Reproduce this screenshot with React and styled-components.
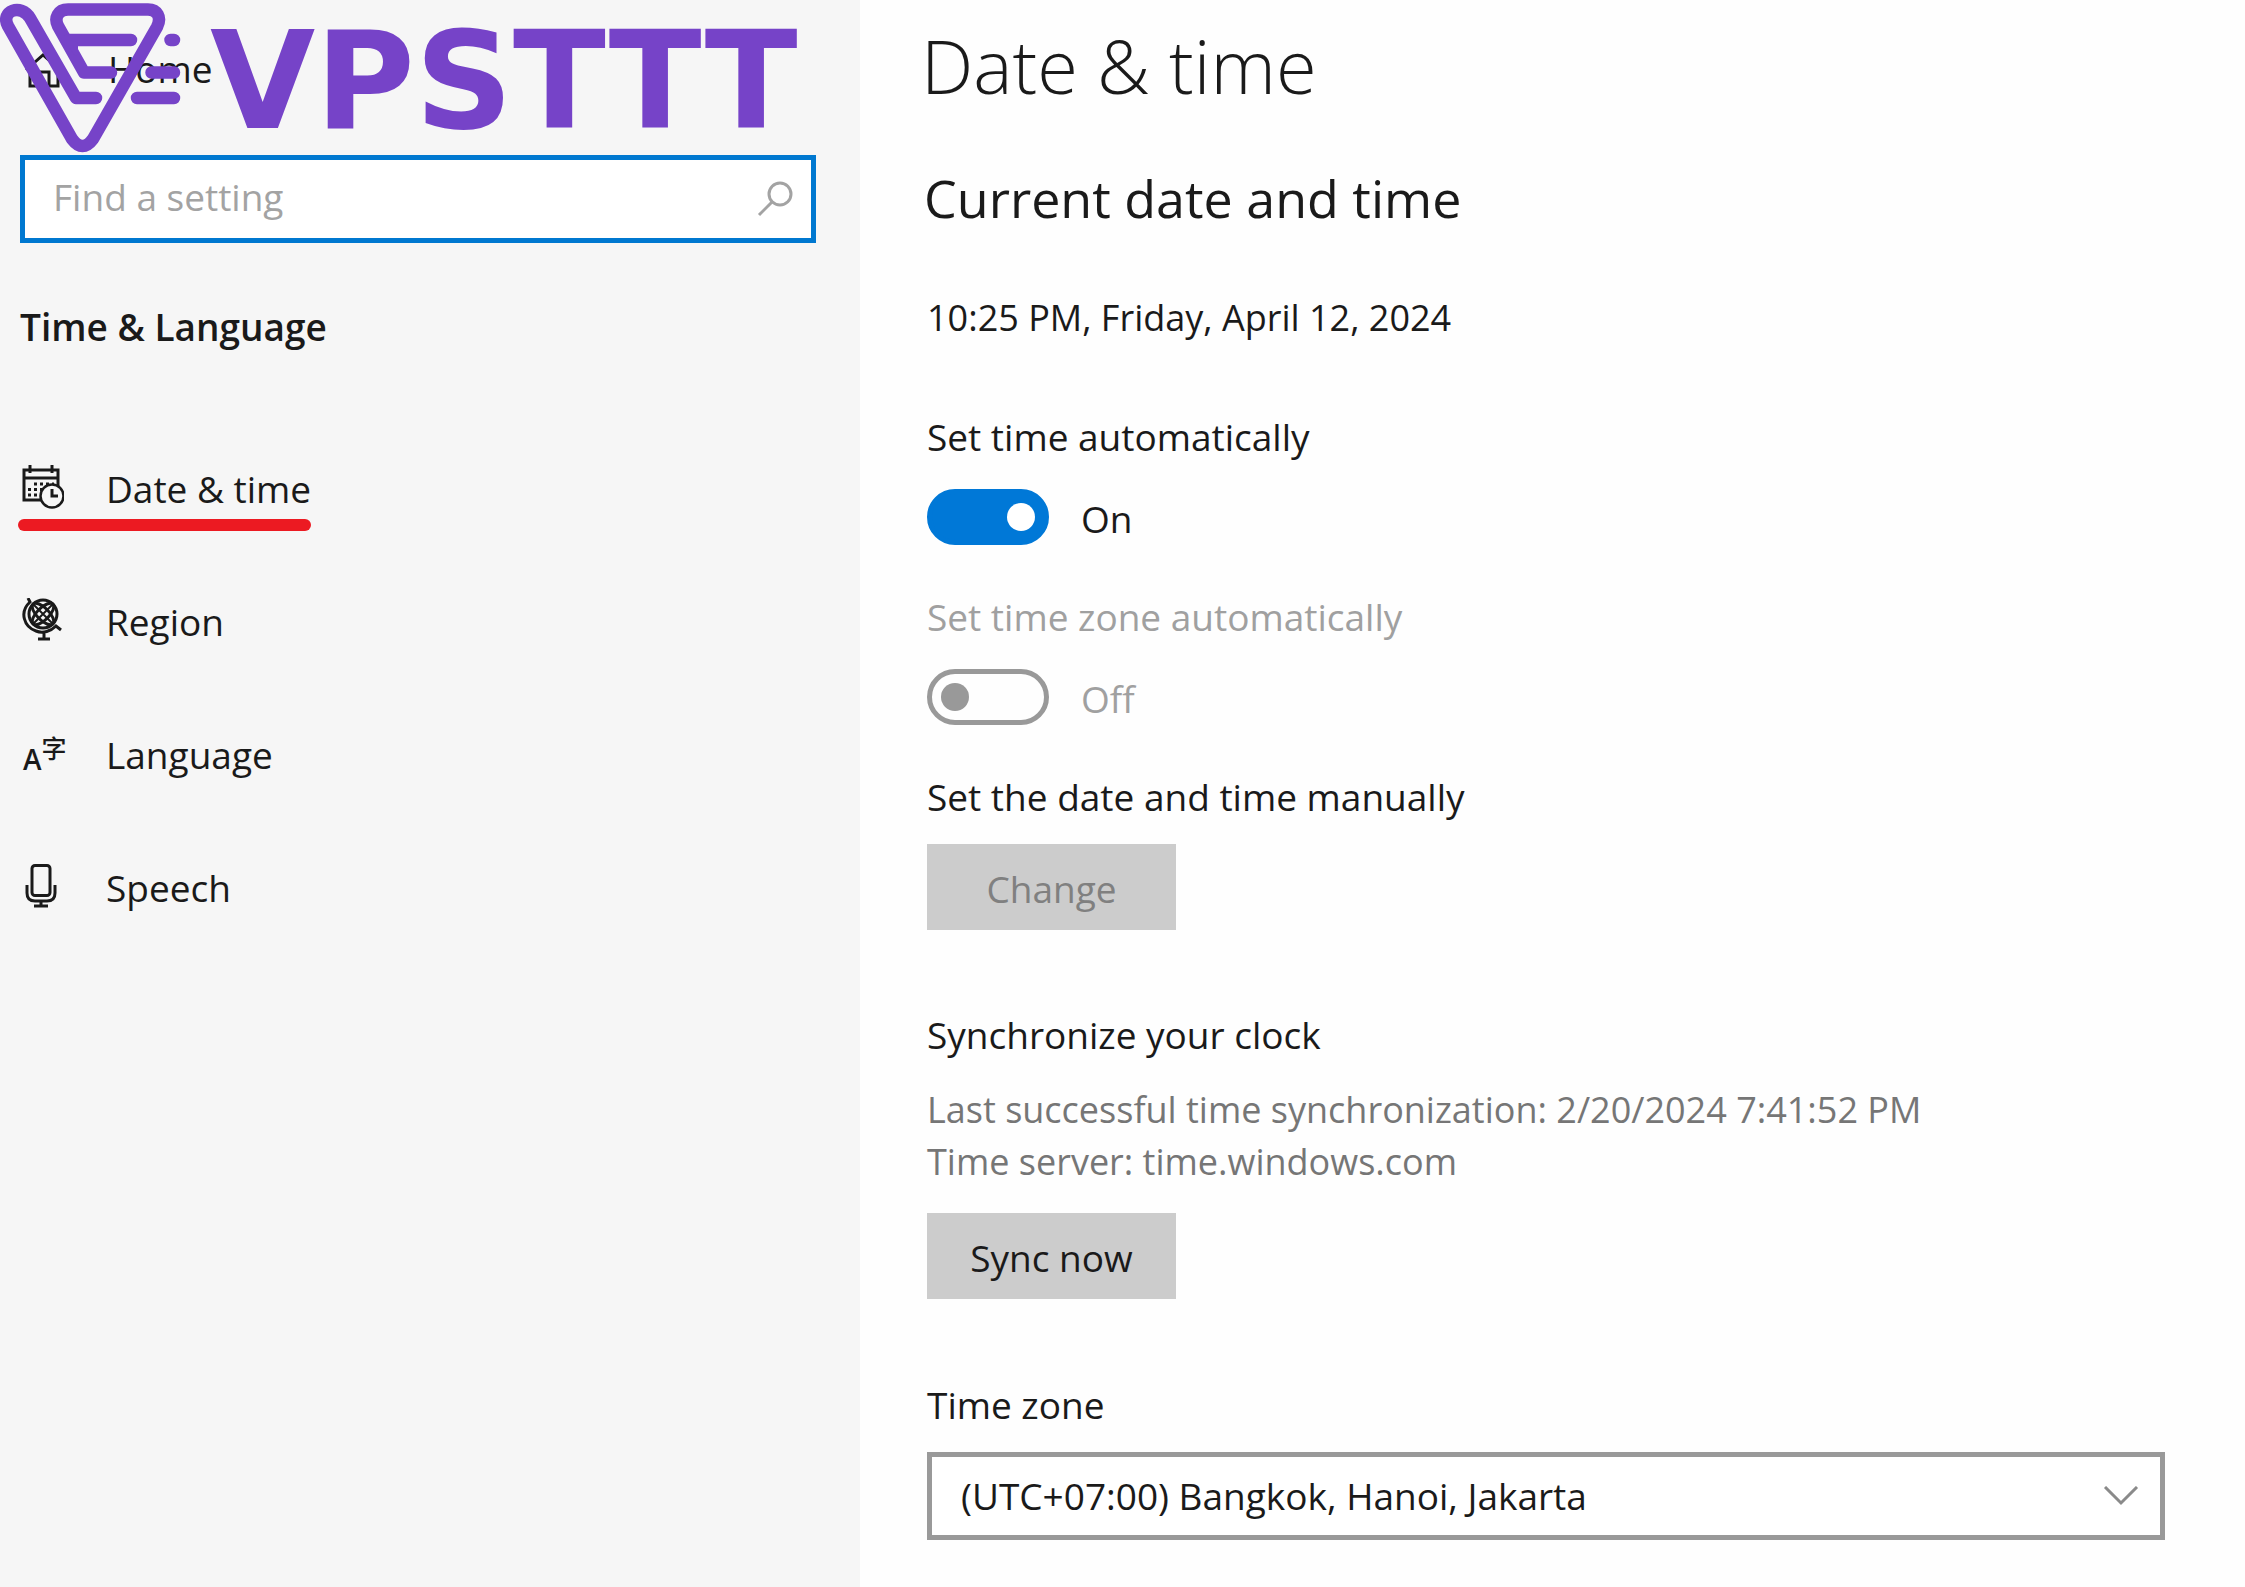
import { useState } from "react";
import styled, { createGlobalStyle } from "styled-components";

const GlobalStyle = createGlobalStyle`
  *,
  *::before,
  *::after {
    box-sizing: border-box;
  }

  body {
    margin: 0;
    background: #fefefe;
    color: #1a1a1a;
    font-family: "Open Sans", "Noto Sans", sans-serif;
    font-size: 37px;
    line-height: 52px;
  }

  h1, h2, h3, p, ul {
    margin: 0;
    padding: 0;
  }

  button, input, select {
    font: inherit;
    color: inherit;
  }
`;

const Page = styled.div`
  display: flex;
  min-height: 100vh;
`;

/* Sidebar */

const Sidebar = styled.aside`
  position: relative;
  flex: 0 1 860px;
  padding: 43px 44px 40px 20px;
  background: #f6f6f6;
`;

const Brand = styled.div`
  position: absolute;
  top: 0;
  left: 0;
  display: flex;
  align-items: flex-start;
  gap: 26px;
  color: #7643c8;
  pointer-events: none;
`;

const BrandName = styled.span`
  font-family: "DejaVu Sans", sans-serif;
  font-size: 136px;
  font-weight: 700;
  line-height: 162px;
`;

const NavLink = styled.a`
  display: flex;
  align-items: center;
  gap: 42px;
  color: inherit;
  text-decoration: none;
`;

const HomeLink = styled(NavLink)`
  padding-left: 2px;
`;

const SearchBox = styled.label`
  display: flex;
  align-items: center;
  height: 88px;
  margin-top: 60px;
  padding: 0 14px 0 28px;
  border: 5px solid #0078d0;
  background: #fff;
  color: #a3a3a3;
`;

const SearchInput = styled.input`
  flex: 1;
  min-width: 0;
  padding: 0 0 4px;
  border: 0;
  outline: 0;
  background: transparent;

  &::placeholder {
    color: #a3a3a3;
    opacity: 1;
  }
`;

const SidebarTitle = styled.h3`
  margin-top: 58px;
  font-size: 37px;
  font-weight: 600;
`;

const NavList = styled.ul`
  display: flex;
  flex-direction: column;
  gap: 65px;
  margin-top: 110px;
  list-style: none;
`;

const NavItem = styled.li`
  width: fit-content;
  height: 68px;

  &::after {
    content: "";
    display: ${({ $active }) => ($active ? "block" : "none")};
    height: 12px;
    margin-top: 4px;
    margin-left: -2px;
    border-radius: 6px;
    background: #ec1a22;
  }
`;

const Icon = styled.svg`
  flex: none;
  width: 44px;
  height: 44px;
  fill: none;
  stroke: currentColor;
  stroke-width: 3;
`;

const NavIcon = styled(Icon)`
  height: 48px;
`;

const LanguageGlyphs = styled.span`
  display: flex;
  flex: none;
  align-items: center;
  width: 44px;
  height: 52px;
`;

const LatinGlyph = styled.span`
  padding: 8px 0 0 3px;
  font-size: 28px;
  font-weight: 600;
  line-height: 40px;
`;

const HanGlyph = styled.span`
  padding-bottom: 16px;
  font-family: "Noto Sans CJK SC", sans-serif;
  font-size: 25px;
  font-weight: 500;
  line-height: 36px;
`;

/* Content */

const Content = styled.main`
  flex: 1;
  min-width: 0;
  padding: 18px 80px 46px 67px;
`;

const Title = styled.h1`
  margin-left: -6px;
  font-size: 74px;
  font-weight: 350;
  line-height: 96px;
`;

const Subtitle = styled.h2`
  margin: 50px 0 0 -3px;
  font-size: 52px;
  font-weight: 400;
  line-height: 68px;
`;

const Today = styled.p`
  margin-top: 60px;
  font-size: 36px;
`;

const Setting = styled.section`
  display: flex;
  flex-direction: column;
  align-items: flex-start;
  gap: ${({ $gap }) => $gap || 21}px;
  margin-top: ${({ $top }) => $top}px;
  color: ${({ $disabled }) => ($disabled ? "#a0a0a0" : "inherit")};
`;

const Label = styled.label`
  display: block;
`;

const ToggleRow = styled.div`
  display: flex;
  align-items: center;
  gap: 32px;
  height: 56px;
`;

const ToggleState = styled.span`
  padding-top: 4px;
`;

const Toggle = styled.input`
  appearance: none;
  display: flex;
  align-items: center;
  justify-content: flex-start;
  width: 122px;
  height: 56px;
  margin: 0;
  padding: 0 9px;
  border: 5px solid #999;
  border-radius: 28px;

  &::before {
    content: "";
    width: 28px;
    height: 28px;
    border-radius: 50%;
    background: #999;
  }

  &:checked {
    justify-content: flex-end;
    border-color: #0078d7;
    background: #0078d7;
  }

  &:checked::before {
    background: #fff;
  }
`;

const Button = styled.button`
  width: 249px;
  height: 86px;
  padding: 4px 0 0;
  border: 0;
  background: #ccc;

  &:disabled {
    color: #808080;
  }
`;

const Hint = styled.p`
  margin-bottom: 2px;
  color: #767676;
  font-size: 36px;
`;

const SelectBox = styled.div`
  display: grid;
  align-items: center;
  width: 100%;
`;

const Select = styled.select`
  grid-area: 1 / 1;
  appearance: none;
  width: 100%;
  height: 88px;
  padding: 0 80px 0 29px;
  border: 5px solid #999;
  border-radius: 0;
  background: #fff;
`;

const Chevron = styled.svg`
  grid-area: 1 / 1;
  justify-self: end;
  width: 36px;
  height: 20px;
  margin-right: 26px;
  fill: none;
  stroke: #8a8a8a;
  stroke-width: 3;
  pointer-events: none;
`;

function BrandMark() {
  return (
    <svg width="184" height="156" viewBox="0 0 184 156" fill="none" stroke="currentColor" strokeWidth="12.5" strokeLinecap="round" strokeLinejoin="round">
      <path d="M96 98H76L30 18C21 3 0 11 8 26L72 139Q82.500 153 93 139L157 27C162 17 157 9.500 148 9.500H68C58 9.500 54 18 58 26L84 72.500H111" />
      <path d="M68 40H131M170.500 40H174M151.500 72.500H174M137 98H174" />
      <path d="M68 42L76 54V44Z" strokeWidth="4" fill="currentColor" />
    </svg>
  );
}

function HomeIcon() {
  return (
    <Icon viewBox="0 0 44 44">
      <path d="M4 23L21 8L38 23M8 20V39H18V25H27V39H36V20" />
    </Icon>
  );
}

function SearchIcon() {
  return (
    <Icon viewBox="0 0 44 44">
      <circle cx="27" cy="17" r="11" />
      <path d="M19 25L6 38" />
    </Icon>
  );
}

function CalendarIcon() {
  return (
    <NavIcon viewBox="0 0 44 48">
      <path d="M4 5H38V35H4ZM4 13H38M10 0V8M32 0V8" />
      <path d="M14 19H34M8 24.500H28M8 30H22" strokeDasharray="3 3" />
      <circle cx="32" cy="31" r="11.500" fill="#f6f6f6" strokeWidth="2.500" />
      <path d="M32 24V31H38" />
    </NavIcon>
  );
}

function GlobeIcon() {
  return (
    <NavIcon viewBox="0 0 44 48">
      <circle cx="23" cy="16" r="14" />
      <ellipse cx="23" cy="16" rx="6" ry="14" transform="rotate(-45 23 16)" />
      <ellipse cx="23" cy="16" rx="6" ry="14" transform="rotate(45 23 16)" />
      <path d="M13 6L33 26M33 6L13 26" strokeWidth="2" />
      <path d="M8 0L10 4C-1 14 4 29 16 33C23 36 31 33 36 28L41 32M24 34V41M18 41H30" />
    </NavIcon>
  );
}

function LanguageIcon() {
  return (
    <LanguageGlyphs aria-hidden="true">
      <LatinGlyph>A</LatinGlyph>
      <HanGlyph>字</HanGlyph>
    </LanguageGlyphs>
  );
}

function MicIcon() {
  return (
    <NavIcon viewBox="0 0 44 48">
      <rect x="12" y="1.500" width="18" height="30" rx="3" />
      <path d="M7 21V29Q7 37 15 37H27Q35 37 35 29V21M21 37V42M14 42H28" />
    </NavIcon>
  );
}

const links = [
  { text: "Date & time", icon: CalendarIcon, active: true },
  { text: "Region", icon: GlobeIcon },
  { text: "Language", icon: LanguageIcon },
  { text: "Speech", icon: MicIcon },
];

function App() {
  const [autoTime, setAutoTime] = useState(true);

  return (
    <Page>
      <GlobalStyle />
      <Sidebar>
        <HomeLink href="#home">
          <HomeIcon />
          <span>Home</span>
        </HomeLink>
        <SearchBox>
          <SearchInput type="text" placeholder="Find a setting" aria-label="Find a setting" />
          <SearchIcon />
        </SearchBox>
        <SidebarTitle>Time &amp; Language</SidebarTitle>
        <nav>
          <NavList>
            {links.map(({ text, icon: LinkIcon, active }) => (
              <NavItem key={text} $active={active}>
                <NavLink href="#" aria-current={active ? "page" : undefined}>
                  <LinkIcon />
                  <span>{text}</span>
                </NavLink>
              </NavItem>
            ))}
          </NavList>
        </nav>
        <Brand>
          <BrandMark />
          <BrandName>VPSTTT</BrandName>
        </Brand>
      </Sidebar>

      <Content>
        <Title>Date &amp; time</Title>
        <Subtitle>Current date and time</Subtitle>
        <Today>10:25 PM, Friday, April 12, 2024</Today>

        <Setting $top={67} $gap={26}>
          <Label htmlFor="auto-time">Set time automatically</Label>
          <ToggleRow>
            <Toggle
              id="auto-time"
              type="checkbox"
              role="switch"
              checked={autoTime}
              onChange={(e) => setAutoTime(e.target.checked)}
            />
            <ToggleState>{autoTime ? "On" : "Off"}</ToggleState>
          </ToggleRow>
        </Setting>

        <Setting $top={46} $gap={26} $disabled>
          <Label htmlFor="auto-zone">Set time zone automatically</Label>
          <ToggleRow>
            <Toggle id="auto-zone" type="checkbox" role="switch" disabled />
            <ToggleState>Off</ToggleState>
          </ToggleRow>
        </Setting>

        <Setting $top={46}>
          <Label htmlFor="change">Set the date and time manually</Label>
          <Button id="change" type="button" disabled>Change</Button>
        </Setting>

        <Setting $top={79} $gap={23}>
          <p>Synchronize your clock</p>
          <Hint>
            Last successful time synchronization: 2/20/2024 7:41:52 PM
            <br />
            Time server: time.windows.com
          </Hint>
          <Button type="button">Sync now</Button>
        </Setting>

        <Setting $top={80}>
          <Label htmlFor="zone">Time zone</Label>
          <SelectBox>
            <Select id="zone" defaultValue="bangkok">
              <option value="bangkok">(UTC+07:00) Bangkok, Hanoi, Jakarta</option>
            </Select>
            <Chevron viewBox="0 0 36 20">
              <path d="M2 1L18 17L34 1" />
            </Chevron>
          </SelectBox>
        </Setting>
      </Content>
    </Page>
  );
}

export default App;
